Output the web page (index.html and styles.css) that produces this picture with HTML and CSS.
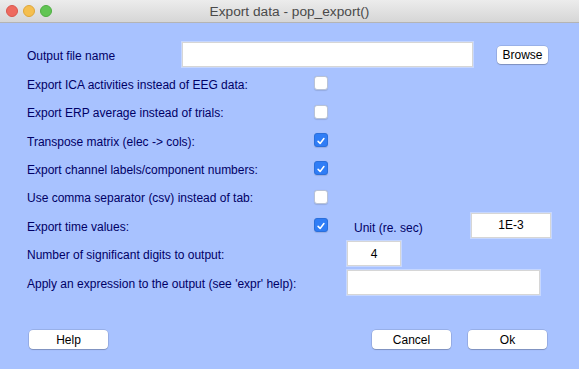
FILE: index.html
```html
<!DOCTYPE html>
<html lang="en">
<head>
  <meta charset="UTF-8">
  <title>Export data - pop_export()</title>
  <link rel="stylesheet" href="styles.css">
</head>
<body>
  <div class="window">
    <div class="titlebar">
      <div class="lights">
        <span class="light red"></span>
        <span class="light yellow"></span>
        <span class="light green"></span>
      </div>
      <div class="title">Export data - pop_export()</div>
    </div>

    <div class="content">
      <div class="rows">
        <div class="row">
          <span class="label w-short">Output file name</span>
          <input class="field f-file" type="text">
          <button class="btn btn-browse">Browse</button>
        </div>

        <div class="row">
          <span class="label w-check">Export ICA activities instead of EEG data:</span>
          <span class="box"></span>
        </div>

        <div class="row">
          <span class="label w-check">Export ERP average instead of trials:</span>
          <span class="box"></span>
        </div>

        <div class="row">
          <span class="label w-check">Transpose matrix (elec -&gt; cols):</span>
          <span class="box checked">
            <svg viewBox="0 0 14 14" width="14" height="14"><path d="M3.6 7.4 L6 9.8 L10.4 4.2" fill="none" stroke="#fff" stroke-width="1.8" stroke-linecap="round" stroke-linejoin="round"/></svg>
          </span>
        </div>

        <div class="row">
          <span class="label w-check">Export channel labels/component numbers:</span>
          <span class="box checked">
            <svg viewBox="0 0 14 14" width="14" height="14"><path d="M3.6 7.4 L6 9.8 L10.4 4.2" fill="none" stroke="#fff" stroke-width="1.8" stroke-linecap="round" stroke-linejoin="round"/></svg>
          </span>
        </div>

        <div class="row">
          <span class="label w-check">Use comma separator (csv) instead of tab:</span>
          <span class="box"></span>
        </div>

        <div class="row">
          <span class="label w-check">Export time values:</span>
          <span class="box checked">
            <svg viewBox="0 0 14 14" width="14" height="14"><path d="M3.6 7.4 L6 9.8 L10.4 4.2" fill="none" stroke="#fff" stroke-width="1.8" stroke-linecap="round" stroke-linejoin="round"/></svg>
          </span>
          <span class="label unit">Unit (re. sec)</span>
          <input class="field f-unit" type="text" value="1E-3">
        </div>

        <div class="row">
          <span class="label w-long">Number of significant digits to output:</span>
          <input class="field f-digits" type="text" value="4">
        </div>

        <div class="row">
          <span class="label w-long">Apply an expression to the output (see 'expr' help):</span>
          <input class="field f-expr" type="text">
        </div>
      </div>

      <div class="actions">
        <button class="btn btn-wide">Help</button>
        <div class="spacer"></div>
        <button class="btn btn-wide">Cancel</button>
        <button class="btn btn-wide">Ok</button>
      </div>
    </div>
  </div>
</body>
</html>
```

FILE: styles.css
```css
:root {
  --back: #a8c2ff;
  --text: #000066;
  --field-border: #d6d6d6;
  --check-blue: #2f7df6;
}

body {
  margin: 0;
  font-family: 'Liberation Sans', Arial, sans-serif;
  background: var(--back);
}

.window {
  width: 579px;
  height: 369px;
  background: var(--back);
  overflow: hidden;
}

.titlebar {
  height: 22px;
  display: flex;
  align-items: center;
  position: relative;
  background: linear-gradient(#ececec, #d6d6d6);
  border-bottom: 1px solid #b4b4b4;
}

.lights {
  display: flex;
  gap: 5px;
  padding-left: 6px;
}

.light {
  width: 12px;
  height: 12px;
  border-radius: 50%;
  box-sizing: border-box;
}

.red { background: #ee6a5f; border: 0.5px solid #d9574d; }
.yellow { background: #f5bf4f; border: 0.5px solid #dea63a; }
.green { background: #61c554; border: 0.5px solid #4fae42; }

.title {
  position: absolute;
  left: 0;
  right: 0;
  text-align: center;
  font-size: 13.7px;
  color: #4a4a4a;
  pointer-events: none;
}

.content {
  padding: 17.5px 0 0 27px;
}

.rows {
  display: flex;
  flex-direction: column;
}

.row {
  height: 28.45px;
  display: flex;
  align-items: center;
}

.label {
  font-size: 12px;
  color: var(--text);
  white-space: nowrap;
  padding-top: 3px;
}

.w-short { width: 155px; }
.w-check { width: 287px; }
.w-long { width: 320px; }

.unit {
  margin-left: 26px;
  width: 117px;
  padding-top: 5px;
}

.field {
  box-sizing: border-box;
  height: 25px;
  margin: 0;
  padding: 0;
  border: 1px solid var(--field-border);
  background: #fff;
  box-shadow: 0 0 0 1px rgba(255, 255, 255, 0.35);
  font-family: inherit;
  font-size: 12px;
  color: #000;
  text-align: center;
  outline: none;
}

.f-file { width: 291px; }
.f-unit { width: 80px; }
.f-digits { width: 54px; }
.f-expr { width: 193px; }

.box {
  width: 14px;
  height: 14px;
  box-sizing: border-box;
  border-radius: 3px;
  background: #fff;
  border: 0.5px solid #b9c3d6;
  box-shadow: 0 0.5px 1px rgba(0, 0, 0, 0.12);
  display: flex;
}

.box.checked {
  background: var(--check-blue);
  border-color: #2a6fdc;
}

.btn {
  height: 19px;
  padding: 0;
  border: none;
  border-radius: 4px;
  background: #fff;
  box-shadow: 0 0 0 0.5px rgba(0, 0, 0, 0.18), 0 1px 1px rgba(0, 0, 0, 0.18);
  font-family: inherit;
  font-size: 12px;
  color: #000;
}

.btn-browse {
  width: 51px;
  height: 18px;
  margin-left: 24px;
}

.actions {
  display: flex;
  align-items: center;
  gap: 17px;
  margin-top: 34px;
  padding-left: 2px;
  width: 518px;
}

.btn-wide { width: 79px; }

.spacer { flex: 1; }
```
